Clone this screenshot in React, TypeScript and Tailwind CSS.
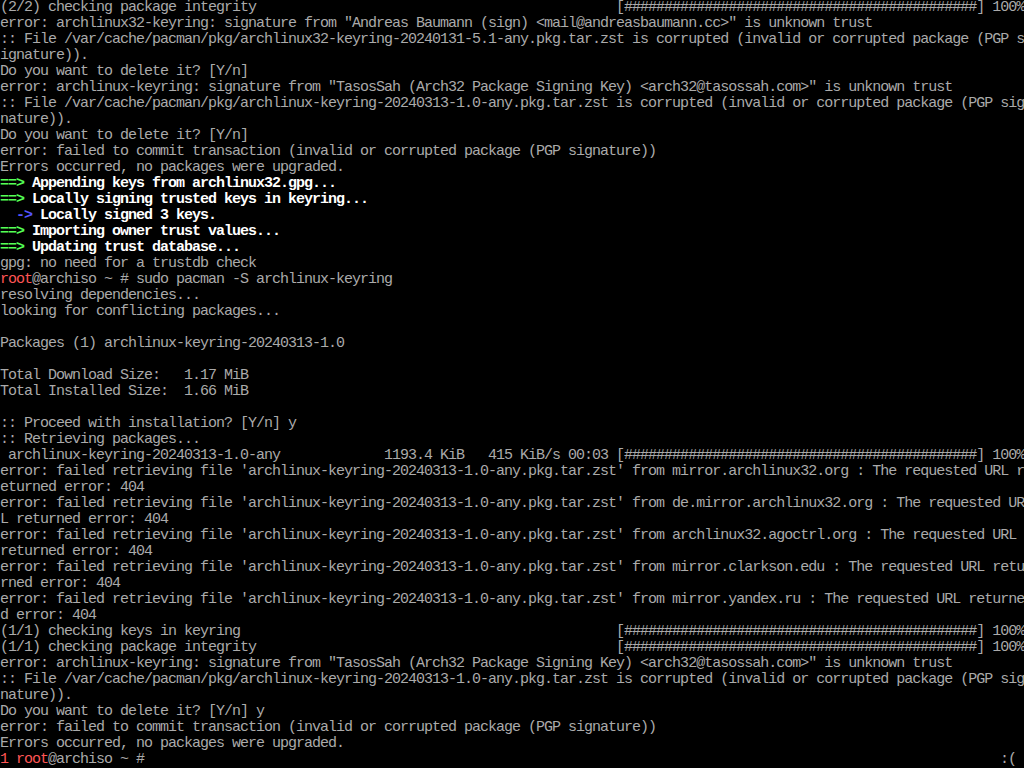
type Seg = { t: string; c?: string };
type Line = Seg[];

const BAR = '[' + '#'.repeat(44) + '] 100%';

const pad = (s: string, col: number) => s + ' '.repeat(Math.max(0, col - s.length));

const plain = (t: string): Line => [{ t }];

const step = (t: string): Line => [
  { t: '==>', c: 'text-[#55ff55] font-bold' },
  { t: ' ' + t, c: 'text-white font-bold' },
];

const corruptLines = [
  ':: File /var/cache/pacman/pkg/archlinux-keyring-20240313-1.0-any.pkg.tar.zst is corrupted (invalid or corrupted package (PGP sig',
  'nature)).',
];

const retrieve = (mirror: string) =>
  "error: failed retrieving file 'archlinux-keyring-20240313-1.0-any.pkg.tar.zst' from " + mirror + ' : The requested URL returned error: 404';

// split a long string into 128-column chunks, like the console does
const wrap = (s: string): Line[] => {
  const out: Line[] = [];
  for (let i = 0; i < s.length; i += 128) out.push(plain(s.slice(i, i + 128)));
  return out;
};

const lines: Line[] = [
  plain(pad('(2/2) checking package integrity', 77) + BAR),
  plain('error: archlinux32-keyring: signature from "Andreas Baumann (sign) <mail@andreasbaumann.cc>" is unknown trust'),
  plain(':: File /var/cache/pacman/pkg/archlinux32-keyring-20240131-5.1-any.pkg.tar.zst is corrupted (invalid or corrupted package (PGP s'),
  plain('ignature)).'),
  plain('Do you want to delete it? [Y/n]'),
  plain('error: archlinux-keyring: signature from "TasosSah (Arch32 Package Signing Key) <arch32@tasossah.com>" is unknown trust'),
  plain(corruptLines[0]),
  plain(corruptLines[1]),
  plain('Do you want to delete it? [Y/n]'),
  plain('error: failed to commit transaction (invalid or corrupted package (PGP signature))'),
  plain('Errors occurred, no packages were upgraded.'),
  step('Appending keys from archlinux32.gpg...'),
  step('Locally signing trusted keys in keyring...'),
  [
    { t: '  ' },
    { t: '->', c: 'text-[#5555ff] font-bold' },
    { t: ' Locally signed 3 keys.', c: 'text-white font-bold' },
  ],
  step('Importing owner trust values...'),
  step('Updating trust database...'),
  plain('gpg: no need for a trustdb check'),
  [{ t: 'root', c: 'text-[#ff5555]' }, { t: '@archiso ~ # sudo pacman -S archlinux-keyring' }],
  plain('resolving dependencies...'),
  plain('looking for conflicting packages...'),
  plain(''),
  plain('Packages (1) archlinux-keyring-20240313-1.0'),
  plain(''),
  plain('Total Download Size:   1.17 MiB'),
  plain('Total Installed Size:  1.66 MiB'),
  plain(''),
  plain(':: Proceed with installation? [Y/n] y'),
  plain(':: Retrieving packages...'),
  plain(pad(' archlinux-keyring-20240313-1.0-any', 48) + '1193.4 KiB   415 KiB/s 00:03 ' + BAR),
  ...wrap(retrieve('mirror.archlinux32.org')),
  ...wrap(retrieve('de.mirror.archlinux32.org')),
  ...wrap(retrieve('archlinux32.agoctrl.org')),
  ...wrap(retrieve('mirror.clarkson.edu')),
  ...wrap(retrieve('mirror.yandex.ru')),
  plain(pad('(1/1) checking keys in keyring', 77) + BAR),
  plain(pad('(1/1) checking package integrity', 77) + BAR),
  plain('error: archlinux-keyring: signature from "TasosSah (Arch32 Package Signing Key) <arch32@tasossah.com>" is unknown trust'),
  plain(corruptLines[0]),
  plain(corruptLines[1]),
  plain('Do you want to delete it? [Y/n] y'),
  plain('error: failed to commit transaction (invalid or corrupted package (PGP signature))'),
  plain('Errors occurred, no packages were upgraded.'),
];

export default function App() {
  return (
    <div className="w-[1024px] h-[768px] overflow-hidden bg-black text-[#aaaaaa] font-['Liberation_Mono','DejaVu_Sans_Mono',monospace] text-[15px] leading-[16px] tracking-[-1px]">
      {lines.map((line, i) => (
        <div key={i} className="h-4 whitespace-pre">
          {line.map((seg, j) => (
            <span key={j} className={seg.c}>
              {seg.t}
            </span>
          ))}
        </div>
      ))}
      {/* prompt with rprompt */}
      <div className="h-4 whitespace-pre flex">
        <span className="text-[#ff5555]">1 root</span>
        <span>@archiso ~ #</span>
        <span className="ml-auto mr-[8px]">:(</span>
      </div>
    </div>
  );
}
